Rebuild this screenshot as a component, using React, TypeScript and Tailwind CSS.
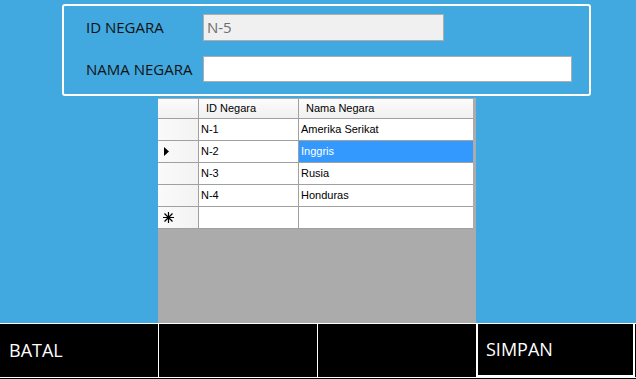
import React from "react";

const rows = [
  { id: "N-1", name: "Amerika Serikat" },
  { id: "N-2", name: "Inggris", selected: true },
  { id: "N-3", name: "Rusia" },
  { id: "N-4", name: "Honduras" },
];

export default function App() {
  return (
    <div
      className="w-[636px] h-[379px] bg-[#41a9e0] flex flex-col overflow-hidden"
      style={{ fontFamily: '"Open Sans", "Noto Sans", sans-serif' }}
    >
      {/* top panel */}
      <div className="ml-[62px] mt-[4px] w-[529px] h-[92px] border-2 border-white rounded-[3px] flex flex-col pl-[22px] pt-[8px] gap-[15px]">
        <div className="flex items-center h-[27px]">
          <div className="w-[117px] text-[15px] text-[#111] leading-none">ID NEGARA</div>
          <div className="w-[241px] h-[27px] bg-[#f0f0f0] border border-[#adadad] flex items-center pl-[3px] text-[15px] text-[#6d6d6d]">
            N-5
          </div>
        </div>
        <div className="flex items-center h-[26px]">
          <div className="w-[117px] text-[15px] text-[#111] leading-none">NAMA NEGARA</div>
          <div className="w-[369px] h-[26px] bg-white border border-[#adadad]" />
        </div>
      </div>

      {/* grid */}
      <div
        className="ml-[158px] mt-[2px] w-[318px] h-[225px] bg-[#ababab] flex flex-col text-[11px] text-black"
        style={{ fontFamily: '"Liberation Sans", Arial, sans-serif' }}
      >
        <div className="flex h-[21px] pt-[1px]">
          <div className="w-[41px] h-[20px] bg-gradient-to-b from-[#fbfbfb] to-[#f1f1f1] border-r border-b border-[#a0a0a0]" />
          <div className="w-[100px] h-[20px] bg-gradient-to-b from-[#fbfbfb] to-[#f1f1f1] border-r border-b border-[#a0a0a0] pl-[7px] flex items-center">
            ID Negara
          </div>
          <div className="w-[174px] h-[20px] bg-gradient-to-b from-[#fbfbfb] to-[#f1f1f1] border-b border-[#a0a0a0] pl-[7px] flex items-center">
            Nama Negara
          </div>
        </div>
        {rows.map((r) => (
          <div key={r.id} className="flex h-[22px]">
            <div className="w-[41px] h-[22px] bg-gradient-to-r from-[#fafafa] to-[#f3f3f3] border-r border-b border-[#a0a0a0] flex items-center pl-[6px]">
              {r.selected && (
                <svg width="5" height="9" viewBox="0 0 5 9">
                  <path d="M0 0 L5 4.5 L0 9 Z" fill="#000" />
                </svg>
              )}
            </div>
            <div className="w-[100px] h-[22px] bg-white border-r border-b border-[#a0a0a0] pl-[2px] flex items-center">
              {r.id}
            </div>
            <div
              className={
                r.selected
                  ? "w-[174px] h-[22px] bg-[#3399ff] text-white border-b border-[#a0a0a0] pl-[2px] flex items-center"
                  : "w-[174px] h-[22px] bg-white border-b border-[#a0a0a0] pl-[2px] flex items-center"
              }
            >
              {r.name}
            </div>
          </div>
        ))}
        <div className="flex h-[22px]">
          <div className="w-[41px] h-[22px] bg-gradient-to-r from-[#fafafa] to-[#f3f3f3] border-r border-b border-[#a0a0a0] flex items-center pl-[5px]">
            <svg width="11" height="11" viewBox="0 0 11 11">
              <path d="M5.5 0 V11 M0 5.5 H11 M1.5 1.5 L9.5 9.5 M9.5 1.5 L1.5 9.5" stroke="#000" strokeWidth="1.2" />
            </svg>
          </div>
          <div className="w-[100px] h-[22px] bg-white border-r border-b border-[#a0a0a0]" />
          <div className="w-[174px] h-[22px] bg-white border-b border-[#a0a0a0]" />
        </div>
      </div>

      {/* bottom buttons */}
      <div className="flex h-[56px] bg-black text-white text-[18px]">
        <div className="w-[159px] h-[55px] border-t border-b border-r border-white flex items-center pl-[9px]">
          BATAL
        </div>
        <div className="w-[159px] h-[55px] border-t border-b border-r border-white" />
        <div className="w-[158px] h-[55px] border-t border-b border-white" />
        <div className="w-[160px] h-[55px] border-t border-b border-white flex">
          <div className="flex-1 h-[53px] border-2 border-white border-t-0 flex items-center pl-[8px] mr-[1px]">
            SIMPAN
          </div>
        </div>
      </div>
    </div>
  );
}
